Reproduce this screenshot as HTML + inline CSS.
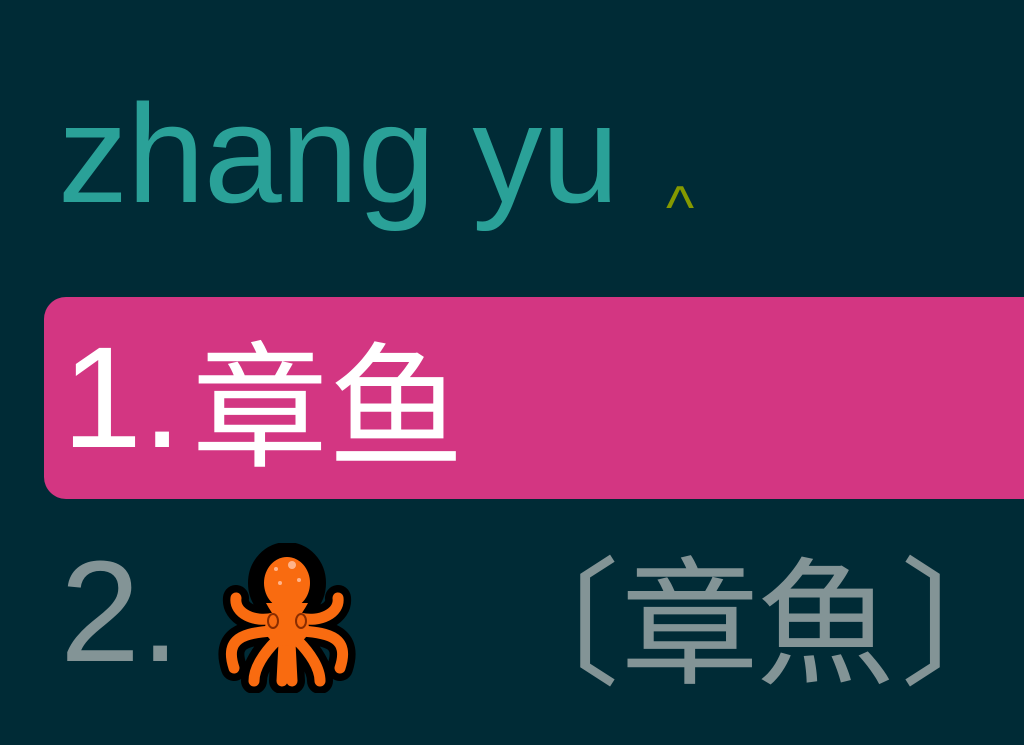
<!DOCTYPE html>
<html><head><meta charset="utf-8"><style>
html,body{margin:0;padding:0;}
body{width:1024px;height:745px;background:#002b36;position:relative;overflow:hidden;font-family:"Liberation Sans","Noto Sans CJK SC",sans-serif;}
.t{position:absolute;white-space:nowrap;line-height:1;}
.c{position:absolute;white-space:nowrap;line-height:1;font-size:138px;color:#839496;font-family:'Noto Sans CJK TC',sans-serif;top:544px;}
</style></head><body>
<div class="t" style="left:58px;top:84px;font-size:140px;color:#2aa198;letter-spacing:-1px;">zhang yu</div>
<div class="t" style="left:666px;top:178px;font-size:60px;color:#859900;">^</div>
<div style="position:absolute;left:44px;top:297px;width:1010px;height:202px;background:#d33682;border-radius:22px;"></div>
<div class="t" style="left:62px;top:326px;font-size:144px;color:#fff;">1.</div>
<div class="t" style="left:192px;top:330px;font-size:136px;color:#fff;font-family:'Noto Sans CJK SC',sans-serif;">章鱼</div>
<div class="t" style="left:60px;top:540px;font-size:144px;color:#839496;">2.</div>
<div class="c" style="left:482px;">〔</div>
<div class="c" style="left:621px;">章</div>
<div class="c" style="left:756px;">魚</div>
<div class="c" style="left:900px;">〕</div>
<svg style="position:absolute;left:214px;top:543px" width="146" height="150" viewBox="0 0 146 150">
<g fill="none" stroke="#000" stroke-width="26" stroke-linecap="round" stroke-linejoin="round">
<ellipse cx="73" cy="40" rx="26" ry="28" fill="#000"/>
<path d="M60 75 C40 80 20 70 22 55 M86 75 C106 80 126 70 124 55 M58 88 C30 90 10 95 20 125 M88 88 C116 90 136 95 126 125 M62 98 C50 110 40 125 40 138 M84 98 C96 110 106 125 106 138 M70 100 L68 138 M76 100 L78 138"/>
</g>
<g fill="none" stroke="#f96b10" stroke-width="11" stroke-linecap="round" stroke-linejoin="round">
<path d="M60 75 C40 80 20 70 22 55 M86 75 C106 80 126 70 124 55 M58 88 C30 90 10 95 20 125 M88 88 C116 90 136 95 126 125 M62 98 C50 110 40 125 40 138 M84 98 C96 110 106 125 106 138 M70 100 L68 138 M76 100 L78 138"/>
</g>
<ellipse cx="73" cy="40" rx="23" ry="26" fill="#f96b10"/>
<path d="M52 60 Q73 100 94 60 Z" fill="#f96b10"/>
<ellipse cx="73" cy="85" rx="22" ry="18" fill="#f96b10"/>
<ellipse cx="59" cy="78" rx="5" ry="7" fill="none" stroke="#8a2d00" stroke-width="2"/>
<ellipse cx="87" cy="78" rx="5" ry="7" fill="none" stroke="#8a2d00" stroke-width="2"/>
<circle cx="78" cy="22" r="4" fill="#ffb38a"/>
<circle cx="62" cy="26" r="2" fill="#ffb38a"/>
<circle cx="66" cy="40" r="2" fill="#ffb38a"/>
<circle cx="85" cy="37" r="2" fill="#ffb38a"/>
</svg>
</body></html>
